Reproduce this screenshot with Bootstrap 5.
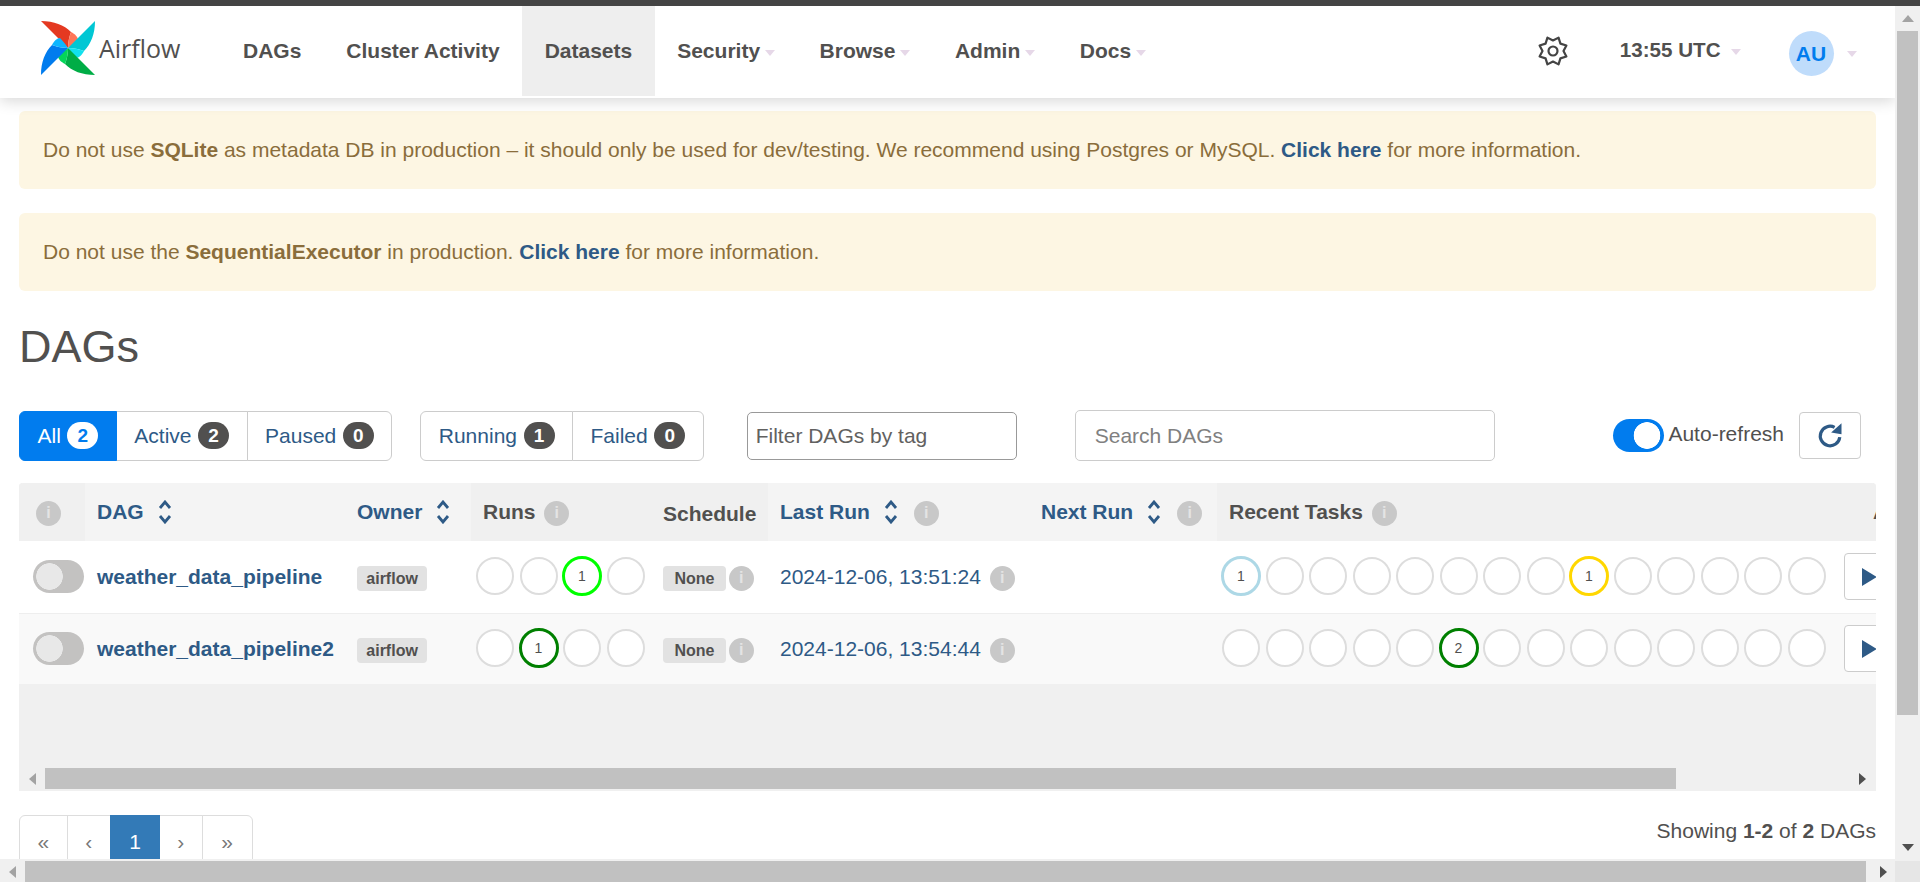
<!DOCTYPE html>
<html lang="en">

<head>
    <meta charset="UTF-8">
    <meta name="viewport" content="width=device-width, initial-scale=1.0">
    <title>DAGs - Airflow</title>
    <link href="https://cdn.jsdelivr.net/npm/bootstrap@5.3.0/dist/css/bootstrap.min.css" rel="stylesheet">
    <style>
        html, body { height: 100%; overflow: hidden; }
        body { font-family: "Liberation Sans", Arial, sans-serif; font-size: 21px; color: #51504f; background: #fff; }
        a { text-decoration: none; }

        /* shell and fake browser scrollbars */
        .top-strip { height: 6px; background: #444; flex: none; }
        .shell-row { min-height: 0; }
        .page-area { min-width: 0; overflow: hidden; }
        .page-body { padding: 0 19px; }
        .vbar { width: 25px; background: #f0f0f0; flex: none; }
        .vbar-btn { height: 25px; }
        .vbar-thumb { width: 21px; height: 684px; margin-left: 2px; background: #c1c1c1; }
        .hbar { height: 23px; background: #f0f0f0; flex: none; padding-top: 2px; }
        .hbar-btn { width: 25px; }
        .hbar-thumb { width: 1841px; background: #c1c1c1; }
        .hbar-corner { width: 25px; background: #e6e6e6; }
        .arr-up { border: 6px solid transparent; border-top: 0; border-bottom: 7px solid #a3a3a3; }
        .arr-down { border: 6px solid transparent; border-bottom: 0; border-top: 7px solid #505050; }
        .arr-left { border: 6px solid transparent; border-left: 0; border-right: 7px solid #a3a3a3; }
        .arr-right { border: 6px solid transparent; border-right: 0; border-left: 7px solid #505050; }

        /* navbar */
        .main-nav { height: 92px; background: #fff; box-shadow: 0 3px 14px rgba(0, 0, 0, .16); position: relative; z-index: 5; align-items: stretch; padding: 0; flex-wrap: nowrap; }
        .brand-box { width: 220.5px; padding-left: 41px; padding-bottom: 9px; flex: none; }
        .brand-txt { font-family: "Open Sans", sans-serif; font-size: 25px; color: #51504f; margin-left: 4px; line-height: 1; margin-top: 2px; }
        .main-nav .navbar-nav .nav-link { color: #51504f; font-weight: 700; font-size: 21px; padding: 0 22.5px; height: 90px; display: flex; align-items: center; white-space: nowrap; }
        .main-nav .navbar-nav .nav-link.active { background: #eee; color: #51504f; }
        .nav-caret { display: inline-block; border: 5.5px solid transparent; border-bottom: 0; border-top: 6px solid #e6d8e8; margin-left: 4.5px; margin-top: 4px; }
        .gear-box { margin-right: 52px; margin-top: -3px; }
        .clock-box { font-weight: 700; font-size: 20.6px; margin-right: 48px; margin-top: -3px; }
        .clock-box .nav-caret { margin-left: 10px; }
        .user-box { margin-right: 38px; }
        .user-dot { width: 45px; height: 45px; border-radius: 50%; background: #bfdcfb; color: #017cee; font-weight: 700; margin-right: 9px; margin-top: 3px; }

        /* alerts */
        .warn-box { height: 78px; background: #fdf6e3; color: #8a6d3b; border: 0; border-radius: 6px; padding: 0 24px; margin-bottom: 24px; display: flex; align-items: center; }
        .warn-box a { color: #2e5a86; font-weight: 700; }
        .warn-box.first-warn { margin-top: 13px; }

        .page-h { font-size: 45px; font-weight: 400; margin: 31px 0 38px; line-height: 50px; color: #51504f; }

        /* toolbar */
        .tool-row { height: 51px; margin-bottom: 22px; padding-right: 15px; }
        .filter-grp { height: 50px; }
        .filter-btn { font-size: 21px; color: #2e5a86; background: #fff; border: 1.5px solid #ccc; padding: 0 17.5px; display: flex; align-items: center; gap: 6.5px; }
        .filter-btn.active { background: #017cee; border-color: #017cee; color: #fff; }
        .count-pill { min-width: 31px; height: 27px; border-radius: 14px; background: #51504f; color: #fff; font-size: 19px; font-weight: 700; padding: 0 8px; line-height: 27px; text-align: center; }
        .filter-btn.active .count-pill { background: #fff; color: #017cee; }
        .tag-input { width: 270px; height: 48px; margin-left: 43px; font-size: 21px; border: 1.25px solid #999; border-radius: 5px; padding: 0 8px; }
        .tag-input::placeholder { color: #51504f; opacity: .9; }
        .search-input { width: 420px; height: 51px; margin-left: 58px; font-size: 21px; border: 1.5px solid #ccc; border-radius: 5px; padding: 0 19px; }
        .search-input::placeholder { color: #808080; }
        .form-switch .sw-input { width: 51px; height: 33px; margin: 0; border: 0; border-radius: 17px; float: none; background-color: transparent; background-size: auto; background-position: 0 0; }
        .form-switch .sw-input.sw-on { background-image: radial-gradient(circle at 34px 50%, #fff 13px, #017cee 13.6px); }
        .form-switch .sw-input.sw-off { background-image: radial-gradient(circle at 16.5px 50%, #e8e8e8 13px, #c3c2c1 13.6px); }
        .sw-wrap { padding: 0; margin: 0; min-height: 0; display: flex; }
        .refresh-btn { width: 62px; height: 47px; margin-left: 15px; border: 1.5px solid #ccc; border-radius: 4px; background: #fff; padding: 0; display: flex; align-items: center; justify-content: center; }

        /* dag table */
        .dag-wrap { height: 308px; background: #f0f0f0; border-radius: 4px 4px 0 0; overflow: hidden; }
        .dag-clip { height: 285px; overflow: hidden; }
        .dag-table { table-layout: fixed; width: 2015px; margin: 0; --bs-table-bg: transparent; color: #51504f; }
        .dag-table > thead > tr > th { height: 58px; background: #f0f0f0; padding: 0 12px; border: 0; vertical-align: middle; font-weight: 700; white-space: nowrap; color: #51504f; }
        .dag-table > thead > tr > th.th-lite { background: #f4f4f4; }
        .dag-table > thead > tr > th.th-first { padding: 0 7px 0 0; text-align: center; }
        .dag-table > thead > tr > th.th-act { padding-left: 39px; }
        .dag-table > thead a { color: #2e5a86; }
        .dag-table > tbody > tr > td { height: 72px; background: #fff; padding: 0 12px; border: 0; border-bottom: 1px solid #eee; vertical-align: middle; white-space: nowrap; color: #51504f; }
        .dag-table > tbody > tr.row-alt > td { background: #f9f9f9; border-bottom: 0; height: 71px; }
        .dag-table > tbody > tr > td.td-toggle { padding: 0 0 0 14px; }
        .dag-table > tbody > tr > td.stat-td { padding-left: 5px; }
        .dag-table > tbody > tr > td.act-td { padding-left: 10px; }
        .sched-h { position: relative; top: 2px; }
        .sort-ico { margin-left: 14px; vertical-align: -5px; }
        .info-dot { display: inline-flex; width: 25px; height: 25px; border-radius: 50%; background: #c8c8c8; color: #e4e4e4; font-size: 16px; font-weight: 700; align-items: center; justify-content: center; vertical-align: 1px; line-height: 1; }
        .gap-s { margin-left: 3px; }
        .gap-n { margin-left: -3px; }
        .name-link { color: #2e5a86; font-weight: 700; }
        .date-link { color: #2e5a86; }
        .tag-pill { display: inline-block; height: 25px; line-height: 25px; padding: 0 9.3px; border-radius: 4px; background: #e2e2e2; color: #51504f; font-size: 16px; font-weight: 700; vertical-align: middle; }
        .tag-pill.tag-wide { padding: 0 11.5px; }
        .stat-strip { gap: 5.5px; }
        .stat-dot { width: 38px; height: 38px; border-radius: 50%; border: 2px solid #ddd; background: #fff; font-size: 14px; color: #51504f; display: flex; align-items: center; justify-content: center; flex: none; margin-top: -1px; }
        .stat-dot.hot { width: 40px; height: 40px; margin: -2px -1px -1px; border-width: 3px; }
        .play-btn { width: 60px; height: 47px; border: 1.5px solid #ccc; border-radius: 4px; background: #fff; padding: 0 0 0 17px; display: flex; align-items: center; }
        .play-tri { border: 9px solid transparent; border-right: 0; border-left: 15px solid #2e5a86; }
        .inner-bar { height: 23px; padding-bottom: 2px; }
        .inner-btn { width: 26px; }
        .inner-thumb { width: 1631px; background: #c1c1c1; }
        .inner-end { padding-right: 10px; }

        /* pagination */
        .pager-row { margin-top: 24px; }
        .pager-list { margin: 0; --bs-pagination-border-color: #ddd; }
        .pager-list .page-link { height: 60px; padding: 13px 0 0; text-align: center; color: #777; font-size: 21px; border: 1.5px solid #ddd; line-height: 1.2; }
        .pager-list .page-item:first-child .page-link { border-radius: 6px 0 0 0; }
        .pager-list .page-item:last-child .page-link { border-radius: 0 6px 0 0; }
        .pager-list .page-item.active .page-link { background: #337ab7; border-color: #337ab7; color: #fff; }
        .pw-a { width: 48.5px; }
        .pw-b { width: 43.5px; }
        .pw-c { width: 49px; }
        .pw-d { width: 42.5px; }
        .pw-e { width: 50px; }
    </style>
</head>

<body class="d-flex flex-column">
    <div class="top-strip"></div>

    <div class="shell-row d-flex flex-grow-1">
        <div class="page-area flex-grow-1">
            <nav class="navbar navbar-expand main-nav">
                <a class="brand-box d-flex align-items-center" href="#">
                    <svg width="54" height="54" viewBox="0 0 54 54">
                        <path fill="#e43921" d="M0 0C13 0 23 4 30 11C28 16 27 22 27 27Z"/>
                        <path fill="#ff7557" d="M27 27C27 22 28 16 30 11C34 13 37 16 37 19C34 22 30 25 27 27Z"/>
                        <g transform="rotate(90 27 27)">
                            <path fill="#00c7d4" d="M0 0C13 0 23 4 30 11C28 16 27 22 27 27Z"/>
                            <path fill="#11e1ee" d="M27 27C27 22 28 16 30 11C34 13 37 16 37 19C34 22 30 25 27 27Z"/>
                        </g>
                        <g transform="rotate(180 27 27)">
                            <path fill="#00ad46" d="M0 0C13 0 23 4 30 11C28 16 27 22 27 27Z"/>
                            <path fill="#04d659" d="M27 27C27 22 28 16 30 11C34 13 37 16 37 19C34 22 30 25 27 27Z"/>
                        </g>
                        <g transform="rotate(270 27 27)">
                            <path fill="#017cee" d="M0 0C13 0 23 4 30 11C28 16 27 22 27 27Z"/>
                            <path fill="#0cb6ff" d="M27 27C27 22 28 16 30 11C34 13 37 16 37 19C34 22 30 25 27 27Z"/>
                        </g>
                    </svg>
                    <span class="brand-txt">Airflow</span>
                </a>
                <ul class="navbar-nav">
                    <li class="nav-item"><a class="nav-link" href="#">DAGs</a></li>
                    <li class="nav-item"><a class="nav-link" href="#">Cluster Activity</a></li>
                    <li class="nav-item"><a class="nav-link active" href="#">Datasets</a></li>
                    <li class="nav-item"><a class="nav-link" href="#">Security<span class="nav-caret"></span></a></li>
                    <li class="nav-item"><a class="nav-link" href="#">Browse<span class="nav-caret"></span></a></li>
                    <li class="nav-item"><a class="nav-link" href="#">Admin<span class="nav-caret"></span></a></li>
                    <li class="nav-item"><a class="nav-link" href="#">Docs<span class="nav-caret"></span></a></li>
                </ul>
                <div class="ms-auto d-flex align-items-center">
                    <svg class="gear-box" width="30" height="30" viewBox="-15 -15 30 30" fill="none" stroke="#444" stroke-width="2.2" stroke-linejoin="round">
                        <polygon points="0,-10.5 5.55,-13.4 7.42,-7.42 13.4,-5.55 10.5,0 13.4,5.55 7.42,7.42 5.55,13.4 0,10.5 -5.55,13.4 -7.42,7.42 -13.4,5.55 -10.5,0 -13.4,-5.55 -7.42,-7.42 -5.55,-13.4"/>
                        <circle r="4.5"/>
                    </svg>
                    <span class="clock-box d-flex align-items-center">13:55 UTC<span class="nav-caret"></span></span>
                    <span class="user-box d-flex align-items-center">
                        <span class="user-dot d-flex align-items-center justify-content-center">AU</span>
                        <span class="nav-caret"></span>
                    </span>
                </div>
            </nav>

            <div class="page-body">
                <div class="warn-box first-warn" role="alert"><span>Do not use <b>SQLite</b> as metadata DB in production &ndash; it should only be used for dev/testing. We recommend using Postgres or MySQL. <a href="#">Click here</a> for more information.</span></div>
                <div class="warn-box" role="alert"><span>Do not use the <b>SequentialExecutor</b> in production. <a href="#">Click here</a> for more information.</span></div>

                <h1 class="page-h">DAGs</h1>

                <div class="tool-row d-flex align-items-center">
                    <div class="btn-group filter-grp">
                        <a href="#" class="btn filter-btn active">All <span class="count-pill">2</span></a>
                        <a href="#" class="btn filter-btn">Active <span class="count-pill">2</span></a>
                        <a href="#" class="btn filter-btn">Paused <span class="count-pill">0</span></a>
                    </div>
                    <div class="btn-group filter-grp ms-4 ps-1">
                        <a href="#" class="btn filter-btn">Running <span class="count-pill">1</span></a>
                        <a href="#" class="btn filter-btn">Failed <span class="count-pill">0</span></a>
                    </div>
                    <input type="text" class="form-control tag-input" placeholder="Filter DAGs by tag">
                    <input type="text" class="form-control search-input" placeholder="Search DAGs">
                    <div class="ms-auto d-flex align-items-center">
                        <div class="form-check form-switch sw-wrap"><input class="form-check-input sw-input sw-on" type="checkbox" checked></div>
                        <span class="ms-1 mb-1">Auto-refresh</span>
                        <button type="button" class="refresh-btn">
                            <svg width="46" height="46" viewBox="0 0 40 40" fill="none">
                                <path d="M28.500 21A8.500 8.500 0 1 1 24 12.500" stroke="#2e5a86" stroke-width="2.800"/>
                                <polygon points="30,9 30,18.500 21,17" fill="#2e5a86"/>
                            </svg>
                        </button>
                    </div>
                </div>

                <div class="dag-wrap">
                    <div class="dag-clip">
                        <table class="table dag-table">
                            <colgroup>
                                <col style="width:66px"><col style="width:260px"><col style="width:126px"><col style="width:180px"><col style="width:117px"><col style="width:261px"><col style="width:188px"><col style="width:617px"><col style="width:200px">
                            </colgroup>
                            <thead>
                                <tr>
                                    <th class="th-first"><span class="info-dot">i</span></th>
                                    <th class="th-lite"><a href="#">DAG</a><svg class="sort-ico" width="14" height="24" viewBox="0 0 14 24" fill="none" stroke="#2e5a86" stroke-width="2.800"><path d="M2 8L7 2L12 8M2 16L7 22L12 16"/></svg></th>
                                    <th class="th-lite"><a href="#">Owner</a><svg class="sort-ico" width="14" height="24" viewBox="0 0 14 24" fill="none" stroke="#2e5a86" stroke-width="2.800"><path d="M2 8L7 2L12 8M2 16L7 22L12 16"/></svg></th>
                                    <th>Runs <span class="info-dot gap-s">i</span></th>
                                    <th><span class="sched-h">Schedule</span></th>
                                    <th class="th-lite"><a href="#">Last Run</a><svg class="sort-ico" width="14" height="24" viewBox="0 0 14 24" fill="none" stroke="#2e5a86" stroke-width="2.800"><path d="M2 8L7 2L12 8M2 16L7 22L12 16"/></svg><span class="info-dot ms-3">i</span></th>
                                    <th class="th-lite"><a href="#">Next Run</a><svg class="sort-ico" width="14" height="24" viewBox="0 0 14 24" fill="none" stroke="#2e5a86" stroke-width="2.800"><path d="M2 8L7 2L12 8M2 16L7 22L12 16"/></svg><span class="info-dot ms-3">i</span></th>
                                    <th>Recent Tasks <span class="info-dot gap-s">i</span></th>
                                    <th class="th-act">Actions</th>
                                </tr>
                            </thead>
                            <tbody id="dagRows"></tbody>
                        </table>
                    </div>
                    <div class="inner-bar d-flex">
                        <div class="inner-btn d-flex align-items-center justify-content-center"><span class="arr-left"></span></div>
                        <div class="inner-thumb"></div>
                        <div class="flex-grow-1 d-flex align-items-center justify-content-end inner-end"><span class="arr-right"></span></div>
                    </div>
                </div>

                <div class="pager-row d-flex justify-content-between align-items-start">
                    <ul class="pagination pager-list">
                        <li class="page-item pw-a"><a class="page-link" href="#">&laquo;</a></li>
                        <li class="page-item pw-b"><a class="page-link" href="#">&lsaquo;</a></li>
                        <li class="page-item pw-c active"><a class="page-link" href="#">1</a></li>
                        <li class="page-item pw-d"><a class="page-link" href="#">&rsaquo;</a></li>
                        <li class="page-item pw-e"><a class="page-link" href="#">&raquo;</a></li>
                    </ul>
                    <div>Showing <b>1-2</b> of <b>2</b> DAGs</div>
                </div>
            </div>
        </div>

        <div class="vbar d-flex flex-column">
            <div class="vbar-btn d-flex align-items-center justify-content-center"><span class="arr-up"></span></div>
            <div class="vbar-thumb"></div>
            <div class="flex-grow-1 d-flex align-items-end justify-content-center pb-2"><span class="arr-down"></span></div>
        </div>
    </div>

    <div class="hbar d-flex">
        <div class="hbar-btn d-flex align-items-center justify-content-center"><span class="arr-left"></span></div>
        <div class="hbar-thumb"></div>
        <div class="flex-grow-1 d-flex align-items-center justify-content-end pe-2"><span class="arr-right"></span></div>
        <div class="hbar-corner"></div>
    </div>

    <script src="https://cdn.jsdelivr.net/npm/bootstrap@5.3.0/dist/js/bootstrap.bundle.min.js"></script>
    <script>
        const dags = [
            { name: "weather_data_pipeline", date: "2024-12-06, 13:51:24", runs: { 2: ["1", "#00ff00"] }, tasks: { 0: ["1", "#add8e6"], 8: ["1", "#ffd700"] } },
            { name: "weather_data_pipeline2", date: "2024-12-06, 13:54:44", runs: { 1: ["1", "#008000"] }, tasks: { 5: ["2", "#008000"] } }
        ];

        // Build a strip of status circles, only the ones with a count get a colour
        const strip = (count, marks) => {
            let html = "";
            for (let i = 0; i < count; i++) {
                html += marks[i]
                    ? `<span class="stat-dot hot" style="border-color:${marks[i][1]}">${marks[i][0]}</span>`
                    : `<span class="stat-dot"></span>`;
            }
            return `<div class="d-flex stat-strip">${html}</div>`;
        };

        document.getElementById("dagRows").innerHTML = dags.map((dag, index) => `
            <tr class="${index % 2 ? "row-alt" : ""}">
                <td class="td-toggle"><div class="form-check form-switch sw-wrap"><input class="form-check-input sw-input sw-off" type="checkbox"></div></td>
                <td><a class="name-link" href="#">${dag.name}</a></td>
                <td><span class="tag-pill">airflow</span></td>
                <td class="stat-td">${strip(4, dag.runs)}</td>
                <td><span class="tag-pill tag-wide">None</span> <span class="info-dot gap-n">i</span></td>
                <td><a class="date-link" href="#">${dag.date}</a> <span class="info-dot gap-s">i</span></td>
                <td></td>
                <td class="stat-td">${strip(14, dag.tasks)}</td>
                <td class="act-td"><button type="button" class="play-btn"><span class="play-tri"></span></button></td>
            </tr>`).join("");
    </script>
</body>

</html>
